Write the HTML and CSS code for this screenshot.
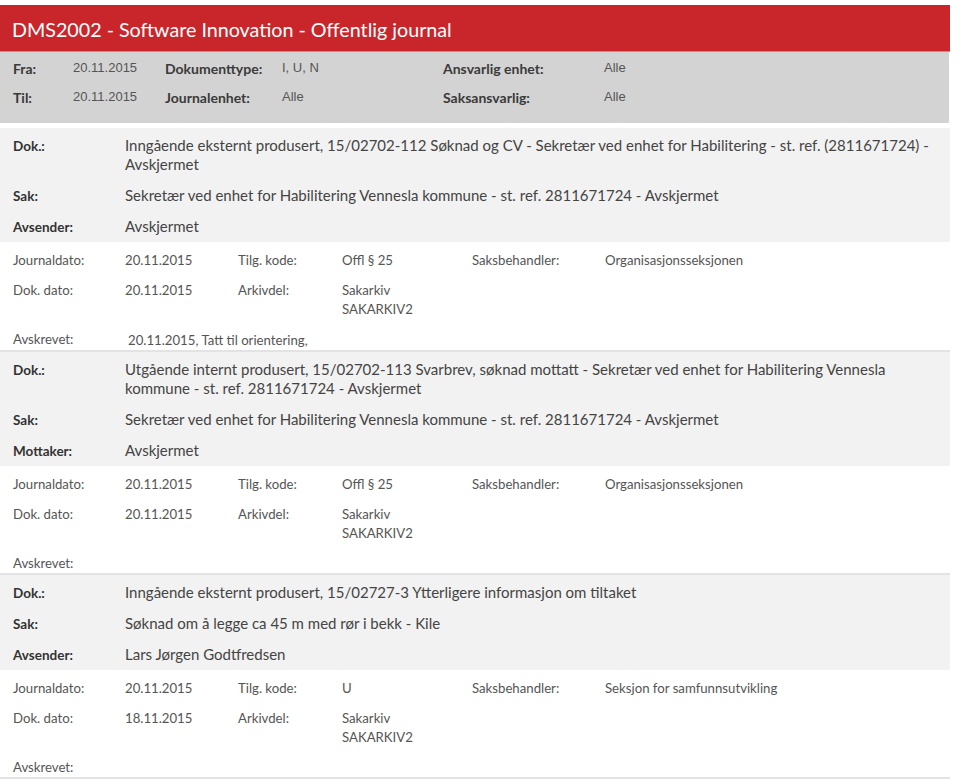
FILE: index.html
```html
<!DOCTYPE html>
<html lang="no">
<head>
<meta charset="utf-8">
<title>DMS2002 - Software Innovation - Offentlig journal</title>
<link rel="stylesheet" href="styles.css">
</head>
<body>
<div class="page">
  <header class="titlebar">
    <h1>DMS2002 - Software Innovation - Offentlig journal</h1>
  </header>

  <section class="filters">
    <span class="f-label">Fra:</span><span class="f-val">20.11.2015</span>
    <span class="f-label">Dokumenttype:</span><span class="f-val">I, U, N</span>
    <span class="f-label">Ansvarlig enhet:</span><span class="f-val">Alle</span>
    <span class="f-label">Til:</span><span class="f-val">20.11.2015</span>
    <span class="f-label">Journalenhet:</span><span class="f-val">Alle</span>
    <span class="f-label">Saksansvarlig:</span><span class="f-val">Alle</span>
  </section>

  <article class="entry">
    <dl class="main">
      <dt>Dok.:</dt><dd>Inngående eksternt produsert, 15/02702-112 Søknad og CV - Sekretær ved enhet for Habilitering - st. ref. (2811671724) - Avskjermet</dd>
      <dt>Sak:</dt><dd>Sekretær ved enhet for Habilitering Vennesla kommune - st. ref. 2811671724 - Avskjermet</dd>
      <dt>Avsender:</dt><dd>Avskjermet</dd>
    </dl>
    <div class="meta">
      <span>Journaldato:</span><span>20.11.2015</span><span>Tilg. kode:</span><span>Offl § 25</span><span>Saksbehandler:</span><span>Organisasjonsseksjonen</span>
      <span>Dok. dato:</span><span>20.11.2015</span><span>Arkivdel:</span><span>Sakarkiv<br>SAKARKIV2</span><span></span><span></span>
    </div>
    <div class="avskrevet"><span>Avskrevet:</span><span class="avs-val">20.11.2015, Tatt til orientering,</span></div>
  </article>

  <article class="entry">
    <dl class="main">
      <dt>Dok.:</dt><dd>Utgående internt produsert, 15/02702-113 Svarbrev, søknad mottatt - Sekretær ved enhet for Habilitering Vennesla kommune - st. ref. 2811671724 - Avskjermet</dd>
      <dt>Sak:</dt><dd>Sekretær ved enhet for Habilitering Vennesla kommune - st. ref. 2811671724 - Avskjermet</dd>
      <dt>Mottaker:</dt><dd>Avskjermet</dd>
    </dl>
    <div class="meta">
      <span>Journaldato:</span><span>20.11.2015</span><span>Tilg. kode:</span><span>Offl § 25</span><span>Saksbehandler:</span><span>Organisasjonsseksjonen</span>
      <span>Dok. dato:</span><span>20.11.2015</span><span>Arkivdel:</span><span>Sakarkiv<br>SAKARKIV2</span><span></span><span></span>
    </div>
    <div class="avskrevet"><span>Avskrevet:</span><span class="avs-val"></span></div>
  </article>

  <article class="entry">
    <dl class="main">
      <dt>Dok.:</dt><dd>Inngående eksternt produsert, 15/02727-3 Ytterligere informasjon om tiltaket</dd>
      <dt>Sak:</dt><dd>Søknad om å legge ca 45 m med rør i bekk - Kile</dd>
      <dt>Avsender:</dt><dd>Lars Jørgen Godtfredsen</dd>
    </dl>
    <div class="meta">
      <span>Journaldato:</span><span>20.11.2015</span><span>Tilg. kode:</span><span>U</span><span>Saksbehandler:</span><span>Seksjon for samfunnsutvikling</span>
      <span>Dok. dato:</span><span>18.11.2015</span><span>Arkivdel:</span><span>Sakarkiv<br>SAKARKIV2</span><span></span><span></span>
    </div>
    <div class="avskrevet"><span>Avskrevet:</span><span class="avs-val"></span></div>
  </article>
</div>
</body>
</html>
```

FILE: styles.css
```css
* { box-sizing: border-box; }

html, body {
  margin: 0;
  padding: 0;
  background: #ffffff;
}

body {
  font-family: Lato, "Open Sans", "DejaVu Sans", sans-serif;
  color: #444;
}

.page {
  width: 950px;
  padding-top: 5px;
}

.titlebar {
  background: #c8262b;
  height: 47px;
  padding: 0 12px;
  display: flex;
  align-items: center;
  border-bottom: 1px solid #d9847e;
}

.titlebar h1 {
  margin: 0;
  font-weight: 400;
  font-size: 19.7px;
  color: #ffffff;
  line-height: 24px;
  padding-top: 3px;
}

.filters {
  background: #d3d3d3;
  width: 949px;
  height: 71px;
  padding: 2px 0 0 13px;
  display: grid;
  grid-template-columns: 60px 92px 117px 161px 161px 1fr;
  grid-auto-rows: 29px;
  align-items: center;
  margin-bottom: 5px;
}

.f-label {
  font-weight: 700;
  font-size: 14px;
  color: #3a3a3a;
}

.f-val {
  font-family: "Liberation Sans", Arial, sans-serif;
  font-size: 13px;
  color: #555;
  position: relative;
  top: -1px;
}

.entry {
  border-bottom: 2px solid #e3e3e3;
}

.main {
  margin: 0;
  background: #f2f2f2;
  padding: 2px 0 0 13px;
  display: grid;
  grid-template-columns: 112px 1fr;
  align-items: start;
}

.main dt {
  margin: 0;
  font-weight: 700;
  font-size: 13.5px;
  line-height: 19px;
  height: 31px;
  color: #333;
  padding: 7px 0 5px;
}

.main dd {
  margin: 0;
  font-size: 15px;
  line-height: 19px;
  color: #444;
  padding: 6px 20px 6px 0;
}

.main dd:last-child {
  padding-bottom: 3px;
}

.meta {
  padding: 4px 0 0 13px;
  display: grid;
  grid-template-columns: 112px 113px 104px 130px 133px 1fr;
  font-size: 13.2px;
  line-height: 19px;
  color: #555;
}

.meta span {
  padding: 5px 0 5.5px;
}

.avskrevet {
  padding: 6px 0 0 13px;
  display: grid;
  grid-template-columns: 112px 1fr;
  font-size: 13.2px;
  line-height: 19px;
  color: #555;
}

.avs-val {
  padding: 1px 0 0 3px;
}
```
